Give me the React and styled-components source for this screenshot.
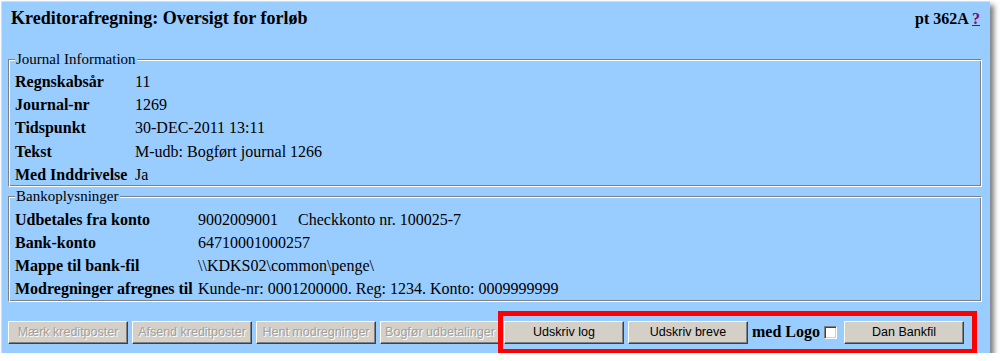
import React from 'react'
import styled, { createGlobalStyle } from 'styled-components'

const GlobalStyle = createGlobalStyle`
  body {
    margin: 0;
    background: #fff;
    font-family: "Liberation Serif", "Times New Roman", serif;
    color: #000;
  }
`

const Window = styled.div`
  box-sizing: border-box;
  margin: 1px 0 0 1px;
  width: 989px;
  height: 352px;
  padding: 0 8px 0 6px;
  border-top: 1px solid #d6dde6;
  border-left: 1px solid #d6dde6;
  background: #99ccff;
  box-shadow: 4px 4px 5px rgba(0, 0, 0, 0.5);
  display: flex;
  flex-direction: column;
`

const Header = styled.div`
  box-sizing: border-box;
  flex-shrink: 0;
  height: 48px;
  padding: 6px 2px 0 3px;
  display: flex;
  justify-content: space-between;
  align-items: baseline;
`

const Title = styled.h1`
  margin: 0;
  font-family: "Liberation Serif", "Times New Roman", serif;
  font-size: 18px;
  font-weight: bold;
`

const PageCode = styled.div`
  font-size: 16px;
  font-weight: bold;
`

const HelpLink = styled.a`
  color: #800080;
  text-decoration: underline;
`

// fieldset med "groove" kant som i gamle IE
const Fieldset = styled.fieldset`
  flex-shrink: 0;
  margin: 0;
  padding: 0 4px 0 6px;
  border: 1px solid;
  border-color: #808080 #fff #fff #808080;
  box-shadow: inset 1px 1px 0 #fff, inset -1px -1px 0 #808080;
  min-width: 0;
`

const Legend = styled.legend`
  padding: 0 1px;
  font-size: 15px;
  line-height: 18px;
  background: #99ccff;
`

const Rows = styled.div`
  padding-top: ${p => p.$top}px;
`

const Row = styled.div`
  display: grid;
  grid-template-columns: ${p => p.$labelWidth}px 1fr;
  align-items: center;
  height: ${p => p.$height}px;
  font-size: 16px;
  white-space: nowrap;
`

const Label = styled.span`
  font-weight: bold;
`

const Note = styled.span`
  margin-left: 20px;
`

const ButtonBar = styled.div`
  flex-shrink: 0;
  margin-top: 9px;
  display: flex;
  align-items: center;
  gap: 4px;
`

const Button = styled.button`
  box-sizing: border-box;
  width: 120px;
  height: 23px;
  padding: 0;
  background: #d4d0c8;
  border: 1px solid;
  border-color: #fff #404040 #404040 #fff;
  box-shadow: inset -1px -1px 0 #808080;
  font-family: "Liberation Sans", Arial, sans-serif;
  font-size: 12.5px;
  color: #000;
  white-space: nowrap;
  overflow: hidden;

  &:disabled {
    color: #a0a0a0;
    text-shadow: 1px 1px 0 #fff;
  }
`

const Highlight = styled.div`
  margin-left: -6px;
  padding: 5px 8px 5px 1px;
  border: 5px solid #ff0000;
  display: flex;
  align-items: center;
  gap: 4px;
`

const LogoLabel = styled.span`
  font-size: 16px;
  font-weight: bold;
`

const Checkbox = styled.input`
  appearance: none;
  box-sizing: border-box;
  margin: 0 3px 0 0;
  width: 13px;
  height: 13px;
  background: #fff;
  border: 1px solid;
  border-color: #808080 #fff #fff #808080;
  box-shadow: inset 1px 1px 0 #404040, inset -1px -1px 0 #d4d0c8;
`

const journal = [
  ['Regnskabsår', '11'],
  ['Journal-nr', '1269'],
  ['Tidspunkt', '30-DEC-2011 13:11'],
  ['Tekst', 'M-udb: Bogført journal 1266'],
  ['Med Inddrivelse', 'Ja'],
]

const bank = [
  ['Udbetales fra konto', <>9002009001<Note>Checkkonto nr. 100025-7</Note></>],
  ['Bank-konto', '64710001000257'],
  ['Mappe til bank-fil', '\\\\KDKS02\\common\\penge\\'],
  ['Modregninger afregnes til', 'Kunde-nr: 0001200000. Reg: 1234. Konto: 0009999999'],
]

function InfoBox({ legend, rows, labelWidth, padTop, rowHeight }) {
  return (
    <Fieldset>
      <Legend>{legend}</Legend>
      <Rows $top={padTop}>
        {rows.map(([label, value]) => (
          <Row key={label} $labelWidth={labelWidth} $height={rowHeight}>
            <Label>{label}</Label>
            <span>{value}</span>
          </Row>
        ))}
      </Rows>
    </Fieldset>
  )
}

export default function App() {
  return (
    <>
      <GlobalStyle />
      <Window>
        <Header>
          <Title>Kreditorafregning: Oversigt for forløb</Title>
          <PageCode>
            pt 362A <HelpLink href="#">?</HelpLink>
          </PageCode>
        </Header>
        <InfoBox legend="Journal Information" rows={journal} labelWidth={120} padTop={2.5} rowHeight={23.2} />
        <InfoBox legend="Bankoplysninger" rows={bank} labelWidth={183} padTop={3.5} rowHeight={23} />
        <ButtonBar>
          <Button disabled>Mærk kreditposter</Button>
          <Button disabled>Afsend kreditposter</Button>
          <Button disabled>Hent modregninger</Button>
          <Button disabled>Bogfør udbetalinger</Button>
          <Highlight>
            <Button>Udskriv log</Button>
            <Button>Udskriv breve</Button>
            <LogoLabel>med Logo</LogoLabel>
            <Checkbox type="checkbox" />
            <Button>Dan Bankfil</Button>
          </Highlight>
        </ButtonBar>
      </Window>
    </>
  )
}
